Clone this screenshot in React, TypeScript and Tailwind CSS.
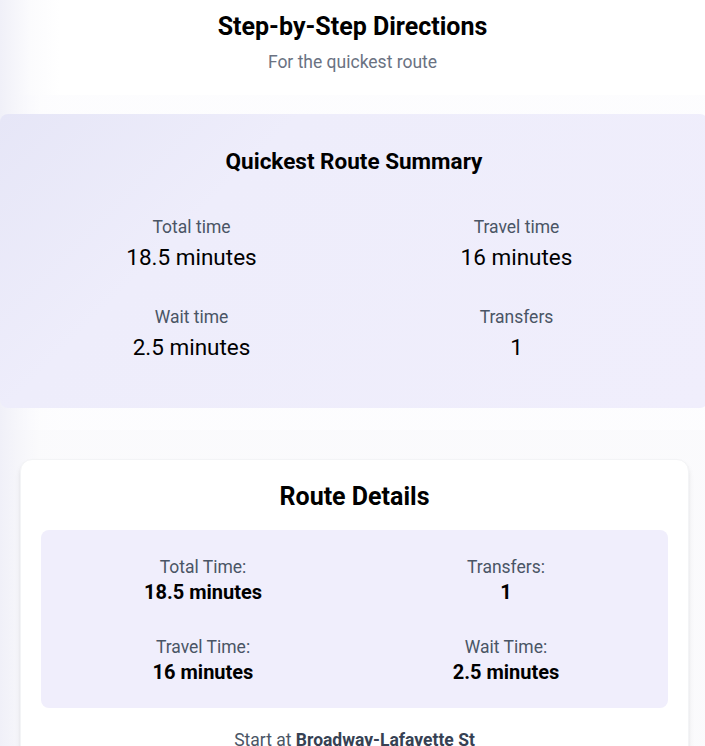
import React from "react";

const summary = [
  { label: "Total time", value: "18.5 minutes" },
  { label: "Travel time", value: "16 minutes" },
  { label: "Wait time", value: "2.5 minutes" },
  { label: "Transfers", value: "1" },
];

const details = [
  { label: "Total Time:", value: "18.5 minutes" },
  { label: "Transfers:", value: "1" },
  { label: "Travel Time:", value: "16 minutes" },
  { label: "Wait Time:", value: "2.5 minutes" },
];

export default function App() {
  return (
    <div
      className="min-h-screen w-[705px] overflow-hidden bg-[linear-gradient(to_right,#f0f0f8_0px,#fbfbfd_30px,#ffffff_60px)] text-black"
      style={{ fontFamily: "Roboto, 'Noto Sans', sans-serif" }}
    >
      <header className="pt-[11px] h-[95px] text-center">
        <h1 className="text-[25px] leading-8 font-bold text-black">Step-by-Step Directions</h1>
        <p className="mt-[7px] text-[17.5px] leading-6 text-gray-500">For the quickest route</p>
      </header>

      <section className="bg-[linear-gradient(to_right,rgba(240,240,248,0.6),rgba(252,252,254,0.8)_40px)] pt-[19px] pb-[22px]">
        <div className="w-[708px] rounded-lg bg-[linear-gradient(135deg,#e6e6f7_0%,#eeedfb_30%,#f0eefc_100%)] pt-8 pb-[46px] text-center">
          <h2 className="text-[22.5px] leading-[30px] font-bold text-black">Quickest Route Summary</h2>
          <div className="mx-auto mt-[38px] grid w-[650px] grid-cols-2 gap-y-[32px]">
            {summary.map((s) => (
              <div key={s.label} className="flex flex-col items-center">
                <span className="text-[17.5px] leading-[26px] text-gray-600">{s.label}</span>
                <span className="mt-[2px] text-[22.5px] leading-[30px] text-black">{s.value}</span>
              </div>
            ))}
          </div>
        </div>
      </section>

      <section className="bg-[linear-gradient(to_right,rgba(240,240,248,0.7),rgba(250,250,252,0.9)_40px)] pt-[29px] pl-5 pr-4">
        <div className="rounded-xl border border-gray-100 bg-white px-5 pt-[21px] pb-6 shadow-md">
          <h2 className="text-center text-[25px] leading-8 font-bold text-black">Route Details</h2>
          <div className="mt-[17px] rounded-lg bg-[#f0eefc] pt-[25px] pb-[23px]">
            <div className="mx-auto grid w-[606px] grid-cols-2 gap-y-[30px] text-center">
              {details.map((d) => (
                <div key={d.label} className="flex flex-col items-center">
                  <span className="text-[17.5px] leading-6 text-gray-600">{d.label}</span>
                  <span className="text-[20px] leading-[26px] font-bold text-black">{d.value}</span>
                </div>
              ))}
            </div>
          </div>
          <p className="mt-5 text-center text-[17.5px] leading-6 text-gray-600">
            Start at <span className="font-bold text-gray-700">Broadway-Lafayette St</span>
          </p>
        </div>
      </section>
    </div>
  );
}
